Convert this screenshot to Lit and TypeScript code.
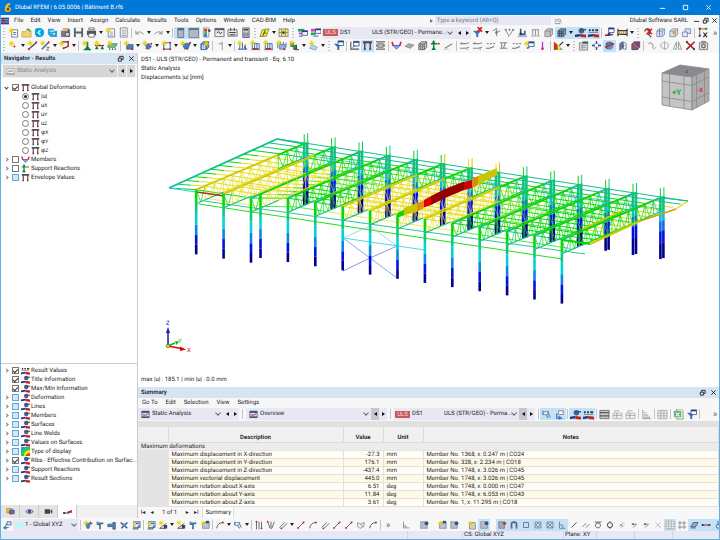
import { LitElement, html, svg, css, nothing, type TemplateResult } from "lit";
import { customElement, property } from "lit/decorators.js";
import { classMap } from "lit/directives/class-map.js";

/* ---------- icon set, drawn on a 12 x 12 grid ---------- */
const star = (x: number, y: number) =>
  svg`<path d="M${x} ${y - 3}V${y + 3}M${x - 3} ${y}H${x + 3}M${x - 2} ${y - 2}L${x + 2} ${y + 2}M${x + 2} ${y - 2}L${x - 2} ${y + 2}" stroke="#e8d000" fill="none"/>`;
const dot = (x: number, y: number, c = "#c8201c", r = 1.1) => svg`<circle cx=${x} cy=${y} r=${r} fill=${c}/>`;
const ln = (d: string, c = "#555", w = 1) => svg`<path d=${d} stroke=${c} stroke-width=${w} fill="none"/>`;
const bx = (d: string, f: string, s = "none") => svg`<path d=${d} fill=${f} stroke=${s} stroke-width=".8"/>`;
const win = (x: number, y: number) => svg`<path d="M${x} ${y}h6v5h-6z" fill="#fff" stroke="#27408b" stroke-width=".8"/><path d="M${x} ${y}h6v1.6h-6z" fill="#27408b"/>`;
const funnel = (c: string) => svg`<path d="M1 4h9L6.8 7.5V11H4.6V7.500z" fill=${c}/>`;
const cube = (f: string, s: string) => svg`<path d="M2 4.500L4.500 2H10.500V8L8 10.500H2zM2 4.500H8V10.500M8 4.500L10.500 2" fill=${f} stroke=${s} stroke-width=".9"/>`;
const local = (c = "#c8201c") => svg`${bx("M0 8.500L6 7.500V10L0 11z", "#1c2f7a")}${bx("M6 7.500L12 8.500V11.500L6 11z", c)}`;

const icons: Record<string, TemplateResult> = {
  grid: svg`${bx("M0 1h12v10H0z", "#28408c")}${ln("M0 4H12M0 7.500H12", "#d8dcec")}${bx("M2 2h3v8H2z", "#b03040")}`,
  new: svg`${bx("M4 3h6.500v8H4z", "#fff", "#556")}${ln("M5.500 6H9M5.500 8H9", "#4a78b0")}${star(3.500, 4)}`,
  open: svg`${bx("M1 5h4l1-1h5v7H1z", "#f0d070", "#c8a840")}${ln("M6 3q3-2 4 2", "#30a040", 1.3)}`,
  cloud: svg`${bx("M3 1h4q4 1 4 5t-4 5H3L1 8V3z", "#00a8e0")}${ln("M7 3.500L4.500 6 7 8.500", "#fff", 1.400)}`,
  block: svg`${bx("M1 2h6l1 2h3v7H4L1 8z", "#28a8e0")}${ln("M3 4.500H8M5 7H9.500", "#fff")}${bx("M6 6h3v3H6z", "#d8f0fc", "#1888c0")}`,
  explorer: svg`${bx("M1 4h10v7H1z", "#787c84")}${bx("M3 1h7v3H3z", "#e8b060")}${bx("M6 6h4v4H6z", "#d8dce8", "#445")}${dot(9.500, 3.500, "#3870c0", 1.300)}`,
  save: svg`${bx("M1 1h10v10H1z", "#5c6068")}${bx("M3 1h6v4H3zM3 7h6v4H3z", "#f4f4f4")}`,
  print: svg`${bx("M1 4h10v5H1z", "#50545c")}${bx("M3 1h6v2H3zM3 7h6v4H3z", "#fff", "#50545c")}`,
  docnew: svg`${bx("M3.500 2h7v9h-7z", "#fff", "#667")}${ln("M5 5.500H9M5 7.500H9M5 9.500H9", "#99a")}${star(3.500, 3.500)}`,
  doc: svg`${bx("M2.500 1h7.500v10H2.500z", "#fff", "#667")}${ln("M4 3.500H8.500M4 5.500H8.500M4 7.500H8.500M4 9.300H8.500", "#99a")}`,
  undo: svg`${ln("M2 4V7.500H5.500M2.500 7Q6 3 10.500 8", "#888")}`,
  redo: svg`${ln("M10 4V7.500H6.500M9.500 7Q6 3 1.500 8", "#888")}`,
  panel: svg`${bx("M3 1.500h6.500v10H3z", "#b0b4bc", "#506080")}${bx("M3 1.500h6.500v2H3z", "#506080")}`,
  panelwide: svg`${bx("M1 1.500h10.500v10H1z", "#b4b8c0", "#607080")}${bx("M1 1.500h10.500v1.800H1z", "#607080")}`,
  legend: svg`${bx("M2.500 1h6v10h-6z", "#eee", "#888")}${bx("M3.500 2h3v3h-3z", "#e03020")}${bx("M3.500 5h3v3h-3z", "#30c040")}${bx("M3.500 8h3v2.500h-3z", "#2060e0")}${dot(9, 4, "#555", 1.500)}`,
  table: svg`${bx("M1 1.500h10v9H1z", "#e8ecf2", "#555c68")}${bx("M1 1.500h10v2H1z", "#555c68")}${ln("M3 6.500L5 5 7 7.500 9 5.500", "#333")}`,
  script: svg`${bx("M1 3h10v7H1z", "#e8e8ec", "#555")}${ln("M2.500 6H9.500M3 8.500H9M4 1V4M8 1V4", "#333")}`,
  calc: svg`${bx("M3 1h7v10.500H3z", "#c8ccd4", "#445")}${ln("M4 3H9", "#445", 1.600)}${ln("M4.500 6V10.500M6.500 6V10.500M8.500 6V10.500", "#667")}`,
  plane: svg`${bx("M3.500 3L11 2 8 10 1 10.500z", "#f0ea48", "#777720")}${ln("M7 3L4 10M5 6.500H8", "#554c00")}`,
  gridyellow: svg`${bx("M1 2h10v8.500H1z", "#f0e870", "#777")}${ln("M4 2V10M8 2V10M1 6H11", "#888")}${dot(6, 6, "#444", 1.500)}`,
  loadin: svg`${bx("M1 2h7v3H1z", "#30a050")}${bx("M2 6h6v2H2z", "#d040c0")}${win(5.500, 4)}${ln("M2 10H6", "#2060c0")}`,
  loadout: svg`${bx("M1 2h5v3H1z", "#d040c0")}${bx("M1 6h5v3H1z", "#30a050")}${win(6, 2)}${ln("M4 10H9", "#2060c0")}`,
  funnelx: svg`${funnel("#3c78b8")}${ln("M6 0L11 5M11 0L6 5", "#e01818", 1.800)}`,
  mem: svg`${ln("M2 4L6 2V10M6 6L10 4", "#9098a0", 1.300)}${dot(6, 6, "#777", 1.400)}`,
  nodes: svg`${ln("M1.500 3L5 9V11M10 3L6 9", "#888")}${dot(2, 3, "#777")}${dot(6, 3, "#777")}${dot(10, 3, "#777")}`,
  support: svg`${bx("M1 9h10v2H1z", "#a8b0b8")}${ln("M4 2V8H8.500V4", "#27509c", 1.600)}${dot(4, 7.500, "#203870", 1.500)}`,
  supgray: svg`${bx("M1 9h10v1.500H1z", "#bbb")}${ln("M3 3V9M6 3V9M9 3V9M2 3H10", "#888")}`,
  cubegray: cube("#c0c4c8", "#888"),
  cubeblue: svg`${cube("#8898b0", "#445870")}${ln("M4 4V10M6 4V10M2 7H8", "#30486c")}`,
  result: svg`${local()}${dot(7, 4, "#46608c", 3)}${ln("M5 3H12", "#35507c", 1.500)}`,
  resultvals: svg`${local()}${ln("M1 3.500H3M4.500 3.500H6.500M8 3.500H11", "#333", 2)}${ln("M1 6H11", "#888")}`,
  resultfilter: svg`${win(5, 1)}${ln("M1 9H5L10 8", "#7a3040", 1.400)}${dot(5.500, 8, "#273c88", 1.600)}`,
  bridge: svg`${ln("M1 2V10M11 2V10M1 4H11M1 8H11", "#333", 1.200)}${ln("M3 4V8M5 4V8M7 4V8M9 4V8", "#c09020")}`,
  findx: svg`${ln("M3 5a3 3 0 1 1 3 3M7 8L10 11", "#444", 1.300)}${ln("M5 2L11 8M11 2L5 8", "#e01818", 1.600)}`,
  cubeout: svg`${cube("#dce4f4", "#7888a8")}${ln("M5 2.500V10", "#5878b0")}`,
  cubeface: svg`${cube("#dce4f4", "#7888a8")}${bx("M5 4h3v4H5z", "#e8a030")}`,
  cubes: svg`${bx("M4.500 2h6v5h-6z", "#dce4f4", "#5870a0")}${bx("M1.500 5.500h5.500v5H1.500z", "#e8ecf8", "#5870a0")}`,
  axes: svg`${ln("M3 1V10M3 2H10", "#e07020", 1.300)}${ln("M7 6L11 11M11 6L7 11", "#222", 1.200)}${dot(3, 2, "#2060d0", 1.400)}${dot(10, 2, "#20a040", 1.400)}${dot(3, 9.500, "#2060d0", 1.400)}`,
  node: svg`${star(4, 4)}${dot(7, 7)}`,
  line: svg`${ln("M2 10L10 3", "#333", 1.200)}${star(3.500, 3.500)}${dot(10, 2.500)}${dot(2, 10)}`,
  member: svg`${ln("M2 10L9 3", "#3068b8", 1.600)}${star(3, 3.500)}${dot(9.500, 2.500)}${ln("M7 8H10L7 11H10", "#555", .8)}`,
  surface: svg`${ln("M3 2H10V7L5 9", "#7c1f20", 1.400)}${star(3, 4)}${dot(5, 9)}${dot(10, 2)}`,
  nodsup: svg`${bx("M6 2h2v5l2 3H4l2-3z", "#108038")}${star(4, 3.500)}${ln("M3 10.500H11", "#108038", 1.500)}`,
  linsup: svg`${ln("M1 6H11", "#b02020", 1.200)}${bx("M3 6L5 10H1zM9 6L11 10H7z", "#108038")}${star(3, 3.500)}${dot(6, 6)}`,
  surfsup: svg`${bx("M1 6L4 4H11L9 8H1z", "#80b890", "#388050")}${star(3, 3.500)}${ln("M3 9V11M6 9V11M9 9V11", "#108038", 1.200)}`,
  loadn: svg`${bx("M4 5h7v5H4z", "#5080b8", "#405878")}${star(3.500, 3.500)}${dot(10, 10)}`,
  loadm: svg`${bx("M3 6L7 3 11 7 7 11z", "#4878b8")}${star(3, 3.500)}${dot(5, 9)}${dot(10, 4)}`,
  loads: svg`${ln("M3 3H10V10H3z", "#4878b8", 1.300)}${dot(10, 3)}${dot(10, 10)}${dot(3, 10)}${star(3.500, 3.500)}`,
  solid: svg`${bx("M3 5L6 3.500 11 4 9 9 5 10z", "#4080b8", "#286090")}${star(3, 3.500)}${dot(8, 9.500)}${dot(11, 3)}`,
  boxload: svg`${cube("#78a0c8", "#385880")}${star(8, 4)}${ln("M4 5V10M6 5V10", "#e8f0f8")}`,
  pennant: svg`${ln("M8 2V11", "#999")}${bx("M8 2L3 4 8 6z", "#bbb")}`,
  imp: svg`${ln("M1 10H11M3 10V5M6 10V3M9 10V5", "#2860b0")}${star(3, 3.500)}${ln("M8 7L10 10", "#c8201c", 1.400)}`,
  dist: svg`${ln("M1.500 10.500H11M2.500 4V10M5 4V10M7.500 4V10M10 4V10M2.500 4H10", "#3468a8")}${star(3, 3)}${ln("M3 9.500H9", "#c8201c", 1.500)}`,
  distbox: svg`${bx("M4 5h6v5H4z", "#9cb8d8", "#3468a8")}${ln("M2 3V9M5 2V5M8 2V5M11 3V8", "#3468a8")}${star(3, 3)}${dot(9, 10, "#c8201c")}`,
  temp: svg`${bx("M2 3h3v3h3v4H5V7H2z", "#30a050", "#205838")}${ln("M8 5V10M6 10.500H11", "#333")}${star(3, 3)}`,
  free: svg`${bx("M4 5L10 8 8 11 2 9z", "#b8d8f4", "#5890c8")}${star(4, 3.500)}`,
  funnelwin: svg`${funnel("#3c78b8")}${win(5.500, 1)}`,
  wincorner: svg`${ln("M2 2V10H11", "#555", 1.200)}${win(5, 1.500)}${ln("M4 8L7 6", "#555")}`,
  frame: svg`${ln("M1 2.500H11", "#404858", 2.200)}${ln("M3 3V10M9 3V10", "#7c2f38", 1.500)}${ln("M3 9V11M9 9V11", "#404858", 2)}`,
  beamgray: svg`${ln("M1 2H11M1 10H11", "#666", 1.400)}${bx("M3 4h6v4H3z", "#bbb", "#666")}${ln("M1 5L3 6 1 7M11 5L9 6 11 7", "#555")}`,
  diagram: svg`${ln("M1 6H11", "#7890e8")}${bx("M2 6L6 10 10 6z", "#88a0f0", "#3858d0")}${ln("M1 2L2.500 6M11 2L9.500 6", "#e02820", 1.800)}`,
  plate: svg`${bx("M1 7L5 4 11 5.500 7 9z", "#a8a8a8", "#888")}`,
  meshcube: svg`${cube("#ccc", "#555")}${ln("M4 4V10M6 4V10M2 7H8", "#777")}`,
  react: svg`${ln("M4 2V11M1 4H8", "#108038", 1.600)}${bx("M4 7L6.500 11H1.500zM4 0L6 3H2z", "#108038")}${dot(9.500, 4, "#c8201c")}`,
  slope: svg`${ln("M2 9L10 4", "#888", 1.200)}${ln("M1 10H6", "#bbb")}`,
  stress: svg`${ln("M1 4H7L11 3M1 9H7L11 8", "#888", 1.200)}${ln("M3 2V4M9 9V11", "#999")}`,
  stressb: svg`${ln("M1 9H5L10 7", "#777", 1.200)}${ln("M2 4H4M5.500 4H7.500M9 4H11", "#888", 1.500)}`,
  stressc: svg`${ln("M2 3H10M2 9H10M4 3V9M8 3L6 9", "#888", 1.200)}`,
  winrun: svg`${win(5, 2)}${star(3, 4)}${ln("M3 9L6 8", "#3068d0", 1.600)}`,
  pin: svg`${ln("M6 2V9", "#c030c0", 1.400)}${dot(6, 9.500, "#d020b0", 1.500)}`,
  palette: svg`${bx("M1 2L11 10.500H1z", "#30c040")}${bx("M1 2L5 5.500V10.500H1z", "#e02818")}${bx("M5 5.500L8 8V10.500H5z", "#f0e020")}${ln("M7 6L11 2", "#333", 1.200)}`,
  print2: svg`${bx("M1.500 3h9v8h-9z", "#d8d8d8", "#777")}${bx("M5 1.500h6v2.500H5z", "#556")}${ln("M3 6H9M3 8H9M5 5V10", "#888", .7)}`,
  snapnode: svg`${ln("M6 1V4M6 8V11M1 6H4M8 6H11", "#283c90", 1.400)}${bx("M6 2.500L9.500 6 6 9.500 2.500 6z", "none", "#5068c0")}`,
  shade: svg`${dot(6, 6, "#6c90bc", 4.500)}${ln("M2 4Q6 2 10 4M3 10V5", "#30507c")}${ln("M1 8L11 4", "#c02828", 1.500)}`,
  shade2: svg`${bx("M3 4L6 2V9L3 11z", "#5c86b8", "#30507c")}${ln("M7 2V10H10V4z", "#5c86b8")}${ln("M5 7L8 6", "#c02828", 1.400)}`,
  shade3: svg`${cube("#c04048", "#30507c")}${ln("M3 3L9 9", "#5c86b8", 1.500)}`,
  curve: svg`${ln("M2 4L5 3 8 6 7 9M8 10L11 8", "#aaa", 1.200)}`,
  rotate: svg`${ln("M2 7Q1 3 6 3T10 7M10 6Q10 10 6 9.500T2 6M6 1V11", "#aaa")}`,
  mirror: svg`${ln("M5 2L1.500 10H5zM7 2L10.500 10H7z", "#999")}`,
  cross: svg`${ln("M1.500 2L10.500 10.500M10.500 2L1.500 10.500", "#a02020", 1.600)}${dot(6, 6)}${dot(2, 2, "#444")}${dot(10, 10, "#444")}`,
  camera: svg`${bx("M1.500 3h9v7.500h-9z", "#ddd", "#666")}${bx("M3.500 1h5v2h-5z", "#888")}${ln("M6 4.500A2 2 0 1 1 5.900 4.500", "#666", 1.200)}`,
  heat: svg`${bx("M0 0h12v12H0z", "#e84020")}${bx("M0 0h12v8Q7 8 6 12H0z", "#f8e820")}${bx("M0 0h12v4Q4 4 4 12H0z", "#20d050")}${bx("M0 0h8Q1 3 0 10z", "#20a0f0")}`,
  case: svg`${bx("M1 2h10v8H1z", "#dce4f0", "#444c5c")}${ln("M1 9.500H11", "#444c5c", 2)}${ln("M2 6.500Q6 8 10 5", "#b02828", 1.300)}${bx("M1 1h10v3H1z", "#3c5890")}`,
  casegray: svg`${bx("M1 2h10v8H1z", "#eee", "#999")}${ln("M1 9H11M3 5.500H9", "#999", 1.500)}`,
  jump: svg`${ln("M2 3H8V5L10 9M2 2V6H5L8 10", "#5c88b8", 1.300)}${bx("M3 3h4v3H3z", "#fff", "#889")}`,
  jump2: svg`${ln("M3 5V10H7M5 8L8 10 5 11", "#3c78c0", 1.400)}${bx("M5 2h5v4H5z", "#fff", "#667")}`,
  rows: svg`${bx("M1 1.500h10v9H1z", "#ccc", "#555")}${ln("M1 4H11M1 7.500H11", "#555", 1.500)}`,
  rowsgray: svg`${bx("M1 4.500h10v6H1z", "#eee", "#aaa")}${ln("M3 4V2H8M1 7H11M5 4V10", "#aaa")}`,
  bars: svg`${ln("M2 1V10.500H11", "#999")}${ln("M3 4H6M3 6.500H8M3 9H10", "#bbb", 1.500)}`,
  cells: svg`${bx("M1 1.500h10v9H1z", "#f4f4f4", "#999")}${ln("M4.300 1V11M7.600 1V11M1 4.500H11M1 7.500H11", "#aaa")}`,
  excel: svg`${bx("M4 0h5l2 2v9H4z", "#f0f8f0", "#589058")}${bx("M1 2h8v7H1z", "#68b078")}${ln("M3 4L7 8M7 4L3 8", "#f4fff4", 1.200)}`,
  eye: svg`${ln("M1 6Q6 1 11 6Q6 11 1 6z", "#555", 1.200)}${dot(6, 6, "#2c4c9c", 2.200)}`,
  video: svg`${bx("M1 3h7v6H1zM8.500 5L11 3V9L8.500 7z", "#444")}`,
  beam: svg`${ln("M0 8H6L12 6", "#283c80", 1.600)}${dot(1.500, 8, "#283c80", 1.500)}${bx("M6 6L12 4V7L6 9z", "#c82820")}`,
  display: svg`${bx("M1 2h7v6H1z", "#f0c040", "#a07820")}${bx("M5 4h6v5H5z", "#4878c0", "#284880")}${ln("M4 6L7 10", "#c8201c", 1.500)}`,
  csys: svg`${ln("M3 9L7 3M3 9H8M2 10.500H6", "#4878c0", 1.300)}${bx("M6 2h5v4H6z", "#c8dcf4", "#385888")}${dot(3, 9, "#2c9040", 1.300)}`,
  wp: svg`${bx("M3 4h6L7 10H5z", "#4c84c0", "#305078")}${star(3.500, 3.500)}${ln("M8 2L11 5", "#305078", 1.400)}`,
  wpa: svg`${bx("M2 3h8v2H7v6H5V6H2z", "#4470a0")}${dot(3, 3, "#78a0d0", 1.400)}`,
  wpb: svg`${bx("M1 5h6V3h3v8H7V8H1z", "#4c84c0", "#305078")}`,
  wpc: svg`${ln("M2 3L10 10M10 3L3 10", "#305078", 1.600)}${dot(6, 6, "#5c94d0", 2)}`,
  wpd: svg`${bx("M3 2h8v7H3z", "#d8e4f4", "#305078")}${ln("M4 4H10M2 10.500H8L10 6", "#4470a0", 1.500)}${bx("M2 3h4v4H2z", "#e8d040")}`,
  dimstar: svg`${ln("M2 10L10 4M2 10H10", "#444")}${star(3.500, 3.500)}${bx("M7 6h4v4H7z", "#444")}`,
  snap: svg`${ln("M2 10L10 2", "#555", 1.100)}${dot(2.500, 9.500)}${dot(9, 3)}`,
  snap2: svg`${ln("M2 10Q3 3 10 3", "#555", 1.100)}${dot(9.500, 3)}`,
  snap3: svg`${ln("M2 9L8 3M5 10L11 4", "#555")}${dot(4, 10)}`,
  vlines: svg`${ln("M3 2V11M6 2V11M9 2V11", "#555")}${dot(3, 2)}${dot(9, 10)}`,
  fork: svg`${ln("M2 2L5 10M6 2V11M10 2L7 10", "#555")}${dot(2, 2)}`,
  net: svg`${ln("M2 3L5 5 10 3 9 8 5 10 2 8z M5 5L9 8", "#888")}`,
  ucs: svg`${ln("M3 2V9.500H10M3 7H6V9.500", "#888")}`,
  gridcfg: svg`${bx("M2 2h8v8H2z", "#b8bcc4", "#889")}${dot(9, 4, "#35508c", 2.300)}`,
  gridnew: svg`${bx("M3 3h8v7H3z", "#b8c4d8", "#778")}${star(4, 4)}${bx("M7 1h4v3H7z", "#35508c")}`,
  page: svg`${bx("M3 3h7v8H3z", "#c8d4b8", "#778")}${star(4, 4)}`,
  osnap: svg`${bx("M2 2h7v8H2z", "#9ca8b8", "#778")}${dot(9, 4, "#c83838", 2)}`,
  magnet: svg`${ln("M3 10V5Q3 2.500 6 2.500T9 5V10", "#506090", 2)}${ln("M3 8.500V10.500M9 8.500V10.500", "#d06060", 2)}`,
  sq: ln("M3 3H9V9H3z", "#678", 1.100),
  sqo: svg`${ln("M2.500 2.500H9.500V9.500H2.500z", "#678")}${ln("M6 4A2 2 0 1 1 5.900 4", "#678")}`,
  sqx: svg`${ln("M2.500 2.500H9.500V9.500H2.500zM2.500 2.500L9.500 9.500M9.500 2.500L2.500 9.500", "#678")}`,
  perp: ln("M3 2V10H10M3 6H7V10", "#678"),
  slash: ln("M3 9L9 3", "#555", 1.200),
  slash2: ln("M2 8L6 4M6 9L10 5", "#777", 1.200),
  tangent: svg`${ln("M2 2.500H10M6 3.500A3 3 0 1 1 5.900 3.500", "#555", 1.100)}`,
  circ: svg`${ln("M6 3A3 3 0 1 1 5.900 3M6 1.500V3M6 9V10.500", "#555", 1.300)}`,
  eqa: svg`${ln("M3 8L8 3M5 9L9 6", "#999")}${dot(5, 6, "#888")}`,
  eqb: svg`${ln("M3 5H9L5 9", "#777")}${dot(5, 5, "#555")}`,
  dots: svg`${ln("M3 3L9 9M9 3L3 9", "#bbb")}${dot(8, 8, "#ccc")}`,
  hash: ln("M3.500 1V11M8.500 1V11M1 3.500H11M1 8.500H11", "#888"),
  plane2: svg`${bx("M2 8L5 3H11L8 8z", "#90a8c8", "#304868")}${ln("M2 9.500H8", "#304868")}`,
  hbar: svg`${ln("M1 6H11", "#b04040", 1.500)}${dot(2, 6, "#334", 1.300)}${dot(10, 6, "#334", 1.300)}`,
  drop: svg`${ln("M6 1V6", "#456")}${ln("M6 5A2 2.500 0 1 1 5.900 5", "#456")}`,
  search: svg`${ln("M1 4H5M1 7H4M1 10H10M8 3A2 2 0 1 1 7.900 3M9.500 6.500L11.500 8.500", "#666")}`,
};

/* A row of tool buttons. "v" menu arrow, "|" divider, ":" grip, "_" space, ">>" overflow, leading "*" switched on. */
@customElement("tool-strip")
export class ToolStrip extends LitElement {
  @property({ attribute: false }) items = "";
  @property({ type: Boolean, reflect: true }) small = false;
  static styles = css`
    :host { display: flex; align-items: center; flex: none; font: 9px/10px Roboto, "Open Sans", sans-serif; }
    button { border: 0; padding: 0; margin: 0; background: none; width: 13px; height: 12px; display: grid; place-items: center; color: #222; font: inherit; }
    :host([small]) button { width: 12px; height: 12px; }
    svg { width: 11px; height: 11px; display: block; }
    :host([small]) svg { width: 10px; height: 10px; }
    button.drop, :host([small]) button.drop { width: 6px; }
    .drop::before { content: ""; border: 2px solid transparent; border-top: 3px solid #222; border-bottom: 0; }
    button.on { background: #c3e2f8; }
    .sep { width: 1px; height: 10px; margin: 0 1px; background: #c4c4c8; }
    .grip { width: 2px; height: 10px; margin: 0 2px; background: repeating-linear-gradient(#c0c0c0 0 1px, transparent 1px 3px); }
    .space { width: 6px; }
    button.more { color: #555; width: 8px; }
  `;
  render() {
    let on = false;
    return this.items.split(" ").map((t) => {
      if (t === "|") return html`<span class="sep"></span>`;
      if (t === ":") return html`<span class="grip"></span>`;
      if (t === "_") return html`<span class="space"></span>`;
      if (t === ">>") return html`<button class="more" aria-label="More">»</button>`;
      if (t === "v") return html`<button class=${classMap({ drop: true, on })} aria-label="Options"></button>`;
      on = t[0] === "*";
      const name = on ? t.slice(1) : t;
      return html`<button class=${classMap({ on })} aria-label=${name}><svg viewBox="0 0 12 12" aria-hidden="true">${icons[name]}</svg></button>`;
    });
  }
}

/* A lavender drop-down with previous / next buttons. */
@customElement("case-picker")
export class CasePicker extends LitElement {
  @property() icon = "";
  @property() swatch = "";
  @property() badge = "";
  @property() code = "";
  @property() text = "";
  @property({ type: Boolean, reflect: true }) disabled = false;
  @property({ type: Boolean }) steps = false;
  @property({ type: Boolean }) first = false;
  static styles = css`
    :host { display: flex; flex: none; align-items: center; font: 6px/12px Roboto, "Open Sans", sans-serif; color: #222; height: 12px; min-width: 0; }
    .box { flex: 1; display: flex; align-items: center; height: 12px; background: #e8e8f4; min-width: 0; }
    svg { width: 9px; height: 9px; margin: 0 2px 0 3px; flex: none; }
    .swatch { width: 7px; height: 6px; background: #bdf6f6; margin: 0 2px 0 3px; }
    .badge { background: #c85a5a; color: #f4dada; width: 15px; height: 7px; line-height: 7px; text-align: center; margin: 0 2px 0 1px; flex: none; }
    .code { width: 32px; flex: none; }
    select { appearance: none; border: 0; background: none; padding: 0; margin: 0; font: inherit; color: inherit; flex: 1; min-width: 0; height: 12px; opacity: 1; text-rendering: inherit; }
    .chev { width: 3px; height: 3px; border: solid #666; border-width: 0 1px 1px 0; rotate: 45deg; margin: 0 3px 2px 0; flex: none; }
    button { width: 8px; height: 12px; border: 0; padding: 0; background: #e8e8f4; display: grid; place-items: center; }
    button::before { content: ""; border: 2px solid transparent; border-right: 3px solid #111; border-left: 0; }
    button.next::before { border-left: 3px solid #111; border-right: 0; }
    button.dim { background: #c8c8cc; }
    :host([disabled]) { color: #888; flex: auto; }
    :host([disabled]) .box, :host([disabled]) button { background: #d6d6d6; }
    :host([disabled]) button { margin-left: 1px; }
  `;
  render() {
    return html`<label class="box">
        ${this.icon ? html`<svg viewBox="0 0 12 12" aria-hidden="true">${icons[this.icon]}</svg>` : nothing}
        ${this.swatch ? html`<span class="swatch"></span>` : nothing}
        ${this.badge ? html`<span class="badge">${this.badge}</span><span class="code">${this.code}</span>` : nothing}
        <select aria-label=${this.text} ?disabled=${this.disabled}><option>${this.text}</option></select>
        <span class="chev"></span>
      </label>
      ${this.steps
        ? html`<button class=${classMap({ dim: this.first })} aria-label="Previous"></button><button class="next" aria-label="Next"></button>`
        : nothing}`;
  }
}

/* ---------- structural model: coloured deformation result ---------- */
const TEAL = "#12c08a", GREEN = "#08d808", LIME = "#58e028", YELLOW = "#e4dc20", OCHRE = "#d2c800";
type P = [number, number];
const mix = (a: P, b: P, t: number): P => [a[0] + (b[0] - a[0]) * t, a[1] + (b[1] - a[1]) * t];
const seg = (a: P, b: P, c: string, w = 1) =>
  svg`<line x1=${a[0].toFixed(1)} y1=${a[1].toFixed(1)} x2=${b[0].toFixed(1)} y2=${b[1].toFixed(1)} stroke=${c} stroke-width=${w}/>`;
const STEP: P = [27.4, 4.15];
const front = (k: number): P => [260.5 + STEP[0] * k, 194 + STEP[1] * k];
const back = (k: number): P => [360.5 + STEP[0] * k, 151.500 + STEP[1] * k];
const trussFront = (k: number): P => (k <= 0 ? [251 + STEP[0] * k, 198 + STEP[1] * k] : front(k));

/* deflection level of truss line k at distance t from the front row */
const level = (k: number, t: number): string => {
  if (k < -2.6) return t > 0.8 || t < 0.1 ? TEAL : GREEN;
  if (k < 0.2) return t < 0.72 && t > 0.02 ? YELLOW : t < 0.9 ? GREEN : TEAL;
  if (k < 2.2) return t > 0.35 && t < 0.7 ? LIME : t > 0.85 ? TEAL : GREEN;
  if (k < 6.6) return t < 0.74 ? YELLOW : t < 0.9 ? GREEN : TEAL;
  if (k < 8.2) return t > 0.25 && t < 0.65 ? LIME : t > 0.88 ? TEAL : GREEN;
  return t > 0.86 || t < 0.06 ? TEAL : GREEN;
};
const chord = (k: number, t: number): string => {
  if (k === -2) return t < 0.72 ? OCHRE : GREEN;
  if (k === -1) return t < 0.76 ? OCHRE : GREEN;
  if (k === 3 || k === 4) return t < 0.7 ? OCHRE : GREEN;
  if (k === 6) return t < 0.75 ? OCHRE : "#10cc20";
  return t < 0.08 || t > 0.86 ? TEAL : "#10d010";
};

const column = (x: number, top: number, bottom: number, w: number) => {
  const stops: [string, number][] = [[GREEN, 0], ["#10c880", 0.2], ["#00d4d8", 0.36], ["#0888e0", 0.54], ["#0010e8", 0.7], ["#00008c", 0.85]];
  return stops.map(([c, s], i) => {
    const e = i < 5 ? stops[i + 1][1] : 1;
    return seg([x, top + (bottom - top) * s], [x, top + (bottom - top) * e], c, w);
  });
};
const backColumn = (x: number, top: number, bottom: number) => [
  seg([x, top], [x, top + 14], "#10c080", 2.6),
  seg([x, top + 14], [x, top + 24], "#10b8d8", 2.6),
  seg([x, top + 24], [x, top + 34], "#1070e0", 2.6),
  seg([x, top + 34], [x, top + 46], "#0010e0", 2.6),
  seg([x, top + 46], [x, bottom], "#00008c", 2.6),
];

const purlins = () => {
  const out: unknown[] = [];
  for (let i = 0; i <= 13; i++) {
    const t = i / 13;
    const edge: P = [169 + 108 * t, 188 - 49 * t];
    for (let k = -3; k < 12; k++) {
      const at = (q: number): P => (q === -3 ? edge : mix(trussFront(q), back(q), t));
      const a = at(k);
      const b: P = k === 11 ? mix([590, 243], [688, 201], t) : at(k + 1);
      if (k === 11) {
        out.push(seg(a, b, i > 11 ? TEAL : i > 2 ? YELLOW : GREEN));
        continue;
      }
      const m = mix(a, b, 0.5);
      out.push(seg(a, m, level(k === -3 ? -3 : k, t)), seg(m, b, level(k === -3 ? -2 : k + 0.5, t)));
      if (i % 4 === 1 && k > -3) {
        out.push(seg([a[0], a[1] + 12], [b[0], b[1] + 12], level(k + 0.5, t), 0.7));
      }
    }
  }
  return out;
};

const truss = (k: number) => {
  const a = trussFront(k), b = back(k), n = 12, out: unknown[] = [], depth = 14;
  for (let i = 0; i < n; i++) {
    const t = i / n, u = (i + 1) / n;
    const p = mix(a, b, t), q = mix(a, b, u), m = mix(p, q, 0.5);
    const c = chord(k, t), web = level(k, t);
    out.push(seg([p[0], p[1] + depth], [q[0], q[1] + depth], t < 0.2 ? TEAL : web, 1.2));
    out.push(seg(p, [m[0], m[1] + depth], web, 0.7), seg([m[0], m[1] + depth], q, web, 0.7));
    out.push(seg(p, [p[0], p[1] + depth], web, 0.7));
    out.push(seg(p, q, c, 2));
  }
  return out;
};

const model = () => {
  const bays: unknown[] = [], frontCols: unknown[] = [];
  for (let k = -2; k <= 11; k++) {
    const [x, y] = back(k);
    const top = k >= 3 && k <= 5 ? OCHRE : TEAL;
    bays.push(
      truss(k),
      backColumn(x - 1.5, y, y + 62), backColumn(x + 1.5, y - 1, y + 61),
      seg([x - 1.5, y - 9], [x - 1.5, y], k === 4 || k === 5 ? YELLOW : GREEN), seg([x + 2, y - 10], [x + 2, y], top),
    );
    if (k <= 0) frontCols.push(column(251 + 27.4 * k, 198 + 4.15 * k, 262.7 + 4.15 * k, 2.6));
    if (k >= 0) frontCols.push(column(front(k)[0], front(k)[1], 258 + 4.15 * k, 2.6));
  }
  return svg`
    ${purlins()}
    ${bays}
    ${seg([169, 188], [277, 139], TEAL, 1.800)}
    ${seg([277, 139], [305, 144], TEAL, 1.500)}
    ${seg([169, 188], [196, 192], "#20d0e0")}
    ${seg([197, 192], [224, 196], "#b03018", 1.400)}
    ${seg([199, 204], [562, 259], GREEN, .9)}
    ${seg([204, 201], [585, 254], TEAL, .9)}
    ${seg([562, 240], [590, 244], GREEN, 1.800)}
    ${seg([590, 244], [640, 221], OCHRE, 2.200)}
    ${seg([640, 221], [676, 209], "#d0a010", 1.800)}
    ${seg([676, 209], [688, 201], YELLOW, 1.400)}
    ${seg([582, 229], [622, 211], OCHRE, 1.800)}
    ${seg([662, 198], [688, 201], TEAL, 1.200)}
    <g stroke-width=".8" fill="none">
      <path d="M343 271L370 258L397 246" stroke="#7078e0"/>
      <path d="M343 238L370 258L397 278" stroke="#6890e8"/>
      <path d="M343 238L370 226L397 246" stroke="#78d8d8"/>
      <path d="M343 238L425 250" stroke="#20d0d8"/>
    </g>
    ${frontCols}
    <path d="M397.500 213L404 210V215L397.500 218z" fill="#08d808"/>
    <path d="M404 208L417 203V212L404 215z" fill="#ccc400"/>
    <path d="M417 203L424 200.500V207.500L417 212z" fill="#e09010"/>
    <path d="M424 200L431 196V205L424 207.500z" fill="#e00000"/>
    <path d="M431 196L445 189L464 181.500V190L445 198L431 205z" fill="#980000"/>
    <path d="M464 182L472 180V188L464 190z" fill="#d00000"/>
    <path d="M472 179L478 176V185L472 188z" fill="#e08808"/>
    <path d="M478 176L497 168V175L478 185z" fill="#ccc400"/>`;
};

const navCube = svg`
  <g stroke="#888" stroke-width=".8" stroke-linejoin="round">
    <path d="M662 73L680 65L709 69L692 77z" fill="#8c8c90"/>
    <path d="M662 73L692 77V110L662 105z" fill="#c4c4c6"/>
    <path d="M692 77L709 69V101L692 110z" fill="#acacb0"/>
    <path d="M669.500 74V106.500M684 76V108.500M662 81L692 85.500L709 77M662 97L692 101.500L709 92.500M696.500 75V107.500M704.500 71V103.500M666.500 71L696.500 75M675.500 67L704.500 71M669.500 74L687 66M684 76L702 68" fill="none"/>
  </g>
  <text x="672" y="95" class="face" fill="#18b030">+Y</text>
  <text x="697" y="92" class="face small" fill="#d03030">-X</text>
  <text x="684" y="73" class="face tiny" fill="#3040a0">-Z</text>`;

const triad = svg`
  <path d="M168 346V331" stroke="#1818a0" stroke-width="1.500"/><path d="M168 327L170 333H166z" fill="#1818a0"/>
  <path d="M168 346L181 348.500" stroke="#e00000" stroke-width="1.500"/><path d="M186 349.500L180 346.500V351z" fill="#e00000"/>
  <path d="M168 346L175 343" stroke="#00b820" stroke-width="1.500"/><path d="M179 341.500L175 341L176.500 345z" fill="#00b820"/>
  <circle cx="168" cy="346" r="1.800" fill="#e8e000" stroke="#333" stroke-width=".5"/>
  <text x="166" y="325" fill="#1818a0">Z</text><text x="187" y="352" fill="#e00000">X</text><text x="178" y="343" fill="#00b820">Y</text>`;

/* ---------- data ---------- */
const menus = ["File", "Edit", "View", "Insert", "Assign", "Calculate", "Results", "Tools", "Options", "Window", "CAD-BIM", "Help"];
type Node = [label: string, icon: string, state: "on" | "off" | "part", open: boolean];
const results: Node[] = [
  ["Members", "diagram", "off", true],
  ["Support Reactions", "react", "off", true],
  ["Envelope Values", "frame", "part", true],
];
const displays: Node[] = [
  ["Result Values", "resultvals", "on", true],
  ["Title Information", "result", "on", false],
  ["Max/Min Information", "result", "on", false],
  ["Deformation", "result", "part", true],
  ["Lines", "result", "part", true],
  ["Members", "result", "part", true],
  ["Surfaces", "result", "part", true],
  ["Line Welds", "result", "part", true],
  ["Values on Surfaces", "result", "part", true],
  ["Type of display", "heat", "part", true],
  ["Ribs - Effective Contribution on Surfac...", "result", "on", true],
  ["Support Reactions", "result", "part", true],
  ["Result Sections", "result", "part", true],
];
const rows = [
  ["Maximum displacement in X-direction", "-27.3", "mm", "Member No. 1368, x: 0.247 m | CO24"],
  ["Maximum displacement in Y-direction", "176.1", "mm", "Member No. 328, x: 2.234 m | CO18"],
  ["Maximum displacement in Z-direction", "-437.4", "mm", "Member No. 1748, x: 3.026 m | CO45"],
  ["Maximum vectorial displacement", "445.0", "mm", "Member No. 1748, x: 3.026 m | CO45"],
  ["Maximum rotation about X-axis", "6.51", "deg", "Member No. 1748, x: 0.000 m | CO47"],
  ["Maximum rotation about Y-axis", "11.84", "deg", "Member No. 1748, x: 6.053 m | CO43"],
  ["Maximum rotation about Z-axis", "3.61", "deg", "Member No. 1, x: 11.295 m | CO18"],
];

const winBtn = (kind: string, label: string) => html`<button class="wb" aria-label=${label}>
  <svg viewBox="0 0 8 8" aria-hidden="true">${
    kind === "min" ? svg`<path d="M1 5H7"/>`
    : kind === "max" ? svg`<path d="M1.500 1.500H6.500V6.500H1.500z"/>`
    : kind === "res" ? svg`<path d="M1.500 3.500H5V7H1.500zM3 3V1.500H7V5H5.500"/>`
    : svg`<path d="M1.500 1.500L6.500 6.500M6.500 1.500L1.500 6.500"/>`
  }</svg></button>`;

@customElement("app-root")
export class AppRoot extends LitElement {
  static styles = css`
    :host { display: flex; flex-direction: column; min-height: 100vh; box-sizing: border-box; font: 6px/9px Roboto, "Open Sans", sans-serif; text-rendering: geometricPrecision; color: #1c1c1c; background: #f7f7f8; border: solid #62aee6; border-width: 0 1px 1px; }
    * { box-sizing: border-box; }
    button { font: inherit; color: inherit; border: 0; padding: 0; margin: 0; background: none; }
    button, input, select { text-rendering: inherit; }
    h1, h2 { font: inherit; margin: 0; }
    .wb { width: 18px; display: grid; place-items: center; }
    .wb svg { width: 7px; height: 7px; fill: none; stroke: currentColor; }
    .title { display: flex; align-items: center; height: 15px; margin: 0 -1px; background: #0078d7; color: #fff; padding-left: 4px; }
    .title svg.logo { width: 8px; height: 9px; margin-right: 3px; }
    .title h1 { flex: 1; }
    .title .wb { width: 23px; }
    .menus { display: flex; align-items: center; height: 11px; }
    .menus > svg { width: 8px; height: 8px; }
    .menus nav { display: flex; flex: 1; gap: 7px; padding-left: 5px; }
    .menus .find { width: 116px; height: 9px; border: 0; padding: 0 2px; margin: 0 3px 0 0; background: #e8e8f4; font: inherit; }
    .find::placeholder { color: #777; opacity: 1; }
    .menus .arrow { border: 2px solid transparent; border-left: 3px solid #777; border-right: 0; margin-right: 2px; }
    .menus svg.look { width: 8px; margin-right: 68px; }
    .menus .wb { width: 9px; }
    .menus .org { margin-right: 4px; }
    .bar { display: flex; align-items: center; height: 13px; overflow: hidden; }
    .bar.wide { gap: 2px; }
    .bar .fill { flex: 1; }
    .body { flex: 1; display: flex; min-height: 0; margin-top: 1px; }
    aside { width: 137px; flex: none; display: flex; flex-direction: column; background: #fff; border-right: 1px solid #ccc; }
    .head { display: flex; align-items: center; height: 11px; background: #d6e4f2; padding-left: 3px; font-weight: 600; }
    .head h2 { flex: 1; }
    .head .wb { width: 11px; }
    aside .pick { display: flex; background: #f4f4f4; padding: 1px 2px 1px 2px; }
    .tree { list-style: none; margin: 0; padding: 2px 0 0 3px; overflow: hidden; }
    .tree.top { flex: 1; padding-top: 5px; }
    .tree.low { border-top: 1px solid #ccc; height: 142px; }
    .tree label { display: flex; align-items: center; height: 9px; white-space: nowrap; }
    .tree label.kid { padding-left: 10px; }
    .tree svg { width: 9px; height: 9px; margin: 0 1px 0 2px; flex: none; }
    .tree sub { font-size: 5px; line-height: 5px; vertical-align: baseline; }
    .tw { width: 3px; height: 3px; border: solid #777; border-width: 1px 1px 0 0; rotate: 45deg; margin: 0 4px 0 1px; flex: none; }
    .tw.down { rotate: 135deg; border-color: #333; }
    .tw.none { border-color: transparent; }
    .tree input { appearance: none; width: 7px; height: 7px; margin: 0; border: 1px solid #777; background: #fff; flex: none; display: grid; place-items: center; }
    .tree input.part { background: #cfe8fa; border-color: #6aa5cf; }
    .tree input[type="radio"] { border-radius: 50%; }
    .tree input[type="checkbox"]:checked::before { content: ""; width: 4px; height: 2px; border: solid #333; border-width: 0 0 1px 1px; rotate: -45deg; }
    .tree input[type="radio"]:checked::before { content: ""; width: 3px; height: 3px; border-radius: 50%; background: #222; }
    .tabs { display: flex; height: 13px; background: #f0f0f0; }
    .tabs button { width: 19px; display: grid; place-items: center; background: #e4e4e4; border-right: 1px solid #ccc; }
    .tabs button.cur { background: #fff; }
    .tabs svg { width: 9px; height: 9px; }
    main { flex: 1; min-width: 0; display: flex; flex-direction: column; }
    .view { flex: 1; position: relative; background: #fff; padding: 2px 3px 3px; display: flex; flex-direction: column; justify-content: space-between; }
    .view p { margin: 0; position: relative; }
    .view svg { position: absolute; inset: 0; width: 100%; height: 100%; font: 6px Roboto, "Open Sans", sans-serif; }
    .face { font-weight: 700; font-size: 8px; }
    .face.small { font-size: 6px; }
    .face.tiny { font-size: 4px; }
    .submenu { display: flex; gap: 8px; height: 10px; align-items: center; padding-left: 4px; }
    .static { width: 101px; } .overview { width: 141px; } .combo { width: 141px; } .coords { width: 66px; }
    .main-case { width: 149px; }
    .tbl { overflow: hidden; border-top: 6px solid #e0e0e0; }
    table { width: 100%; border-collapse: collapse; table-layout: fixed; }
    th { height: 16px; font-weight: 600; vertical-align: bottom; padding: 0; background: #f0f0f0; border: solid #dcdcdc; border-width: 0 1px 1px 0; }
    td { height: 8px; line-height: 7px; padding: 0 3px; border: solid #e2e0d8; border-width: 0 1px 1px 0; background: #fffdf5; white-space: nowrap; }
    tbody tr:nth-child(odd) td { background: #fff9e8; }
    tbody tr:nth-child(n) td:first-child { background: #e4e4e4; border-color: #e4e4e4; }
    tbody tr:nth-child(n) td.group { background: #ececec; }
    td.num { text-align: right; }
    .c1 { width: 30px; } .c2 { width: 175px; } .c3 { width: 40px; }
    .pager { display: flex; align-items: center; height: 11px; gap: 3px; padding-left: 2px; background: #f7f7f7; }
    .pager button { width: 6px; }
    .pager span { margin: 0 4px 0 4px; }
    .pager .cur { width: 32px; height: 11px; background: #fff; border: solid #ddd; border-width: 0 1px; }
    footer { display: flex; height: 8px; align-items: center; justify-content: flex-end; background: #e8e8f4; line-height: 8px; }
    footer span { border-left: 1px solid #d4d4de; height: 8px; width: 38px; padding-left: 1px; }
    footer .s2 { width: 55px; } footer .s3 { width: 101px; } footer .s4 { width: 33px; } footer .s5 { width: 47px; }
  `;

  private branch([label, icon, state, open]: Node) {
    return html`<li><label><span class=${classMap({ tw: true, none: !open })}></span>
      <input type="checkbox" class=${state} .checked=${state === "on"} />
      <svg viewBox="0 0 12 12" aria-hidden="true">${icons[icon]}</svg>${label}</label></li>`;
  }

  render() {
    return html`
      <header class="title">
        <svg class="logo" viewBox="0 0 9 10" aria-hidden="true"><path d="M5 0L8 1Q4 3 4 5Q8 4 8 7T4 10T1 6Q1 2 5 0z" fill="#f4b820"/><circle cx="4.500" cy="7" r="1.500" fill="#604008"/></svg>
        <h1>Dlubal RFEM | 6.05.0006 | Bâtiment B.rf6</h1>
        ${winBtn("min", "Minimize")}${winBtn("max", "Maximize")}${winBtn("close", "Close")}
      </header>
      <div class="menus">
        <svg viewBox="0 0 12 12" aria-hidden="true">${icons.grid}</svg>
        <nav>${menus.map((m) => html`<button>${m}</button>`)}</nav>
        <span class="arrow"></span>
        <input class="find" aria-label="Search" placeholder="Type a keyword (Alt+Q)" />
        <svg class="look" viewBox="0 0 12 12" aria-hidden="true">${icons.search}</svg>
        <span class="org">Dlubal Software SARL</span>
        ${winBtn("min", "Minimize")}${winBtn("res", "Restore")}${winBtn("close", "Close")}
      </div>
      <div class="bar">
        <tool-strip .items=${": new open cloud block explorer save print v docnew doc | undo v redo v | *panel *panelwide legend table script calc : plane v gridyellow : loadin loadout"}></tool-strip>
        <case-picker class="main-case" badge="ULS" code="DS1" text="ULS (STR/GEO) - Permane..." steps></case-picker>
        <tool-strip .items=${"funnelx v mem nodes support supgray cubegray *cubeblue v *result *resultvals | resultfilter bridge v : findx cubeout cubeface cubes | axes"}></tool-strip>
        <span class="fill"></span><tool-strip .items=${">>"}></tool-strip>
      </div>
      <div class="bar">
        <tool-strip .items=${": node v line member v surface v | nodsup linsup surfsup | loadn v loadm v loads v solid v boxload | pennant v | imp dist dist distbox temp v free v : funnelwin | wincorner *frame beamgray | diagram plate meshcube react slope | stress stress stressb stressc stressb winrun pin | palette v : print2 snapnode *shade shade2 shade3 | curve rotate mirror cross camera"}></tool-strip>
      </div>
      <div class="body">
        <aside>
          <div class="head"><h2>Navigator - Results</h2>${winBtn("res", "Undock")}${winBtn("close", "Close")}</div>
          <div class="pick"><case-picker icon="casegray" text="Static Analysis" disabled steps></case-picker></div>
          <ul class="tree top">
            <li><label><span class="tw down"></span><input type="checkbox" .checked=${true} /><svg viewBox="0 0 12 12" aria-hidden="true">${icons.frame}</svg>Global Deformations</label></li>
            ${["|u|", "uX", "uY", "uZ", "φX", "φY", "φZ"].map(
              (n, i) => html`<li><label class="kid"><span class="tw none"></span><input type="radio" name="deformation" .checked=${i === 0} /><svg viewBox="0 0 12 12" aria-hidden="true">${icons.frame}</svg><span>${i === 0 ? n : html`${n[0]}<sub>${n[1]}</sub>`}</span></label></li>`,
            )}
            ${results.map((n) => this.branch(n))}
          </ul>
          <ul class="tree low">${displays.map((n) => this.branch(n))}</ul>
          <div class="tabs">
            ${["display", "eye", "video", "beam"].map((n) => html`<button class=${classMap({ cur: n === "beam" })} aria-label=${n}><svg viewBox="0 0 12 12" aria-hidden="true">${icons[n]}</svg></button>`)}
          </div>
        </aside>
        <main>
          <section class="view">
            <svg viewBox="138 53 581 334" preserveAspectRatio="xMinYMin slice" role="img" aria-label="Deformed structure">${model()}${navCube}${triad}</svg>
            <p>DS1 - ULS (STR/GEO) - Permanent and transient - Eq. 6.10<br />Static Analysis<br />Displacements |u| [mm]</p>
            <p>max |u| : 185.1 | min |u| : 0.0 mm</p>
          </section>
          <section>
            <div class="head"><h2>Summary</h2>${winBtn("res", "Undock")}${winBtn("close", "Close")}</div>
            <div class="submenu">${["Go To", "Edit", "Selection", "View", "Settings"].map((m) => html`<button>${m}</button>`)}</div>
            <div class="bar wide">
              <case-picker class="static" icon="case" text="Static Analysis" steps></case-picker>
              <tool-strip .items=${"|"}></tool-strip>
              <case-picker class="overview" icon="case" text="Overview" steps first></case-picker>
              <tool-strip .items=${"|"}></tool-strip>
              <case-picker class="combo" badge="ULS" code="DS1" text="ULS (STR/GEO) - Perma..." steps first></case-picker>
              <tool-strip .items=${"| *jump *jump2 | *result *resultvals | rows rowsgray rowsgray | bars | cells | excel funnelwin |"}></tool-strip>
              <span class="fill"></span><tool-strip .items=${">>"}></tool-strip>
            </div>
            <div class="tbl"><table>
              <colgroup><col class="c1" /><col class="c2" /><col class="c3" /><col class="c3" /><col /></colgroup>
              <thead><tr><th></th><th>Description</th><th>Value</th><th>Unit</th><th>Notes</th></tr></thead>
              <tbody>
                <tr><td class="group" colspan="5">Maximum deformations</td></tr>
                ${rows.map(([d, v, u, n]) => html`<tr><td></td><td>${d}</td><td class="num">${v}</td><td>${u}</td><td>${n}</td></tr>`)}
              </tbody>
            </table></div>
            <div class="pager"><button aria-label="First">I◂</button><button aria-label="Previous">◂</button><span>1 of 1</span><button aria-label="Next">▸</button><button aria-label="Last">▸I</button><button class="cur">Summary</button></div>
          </section>
        </main>
      </div>
      <div class="bar">
        <tool-strip small .items=${"csys"}></tool-strip>
        <case-picker class="coords" swatch="cyan" text="1 - Global XYZ"></case-picker>
        <tool-strip small .items=${"| wp wpa wpb wpc wpd | wpd dimstar v dimstar wpa gridnew | snap2 v jump v | vlines fork snap3 v snap snap2 snap3 snap snap net snap2 |"}></tool-strip>
        <tool-strip small .items=${">> _ ucs _ gridcfg _ gridnew gridcfg _ page *gridcfg _ *osnap *magnet *sq *sqo *sqx *perp slash slash2 tangent circ eqa eqb eqb dots *cells hash *plane2 *hbar *drop"}></tool-strip>
      </div>
      <footer><span class="s2"></span><span class="s3">CS: Global XYZ</span><span class="s4">Plane: XY</span><span></span><span></span><span class="s5"></span></footer>
    `;
  }
}
